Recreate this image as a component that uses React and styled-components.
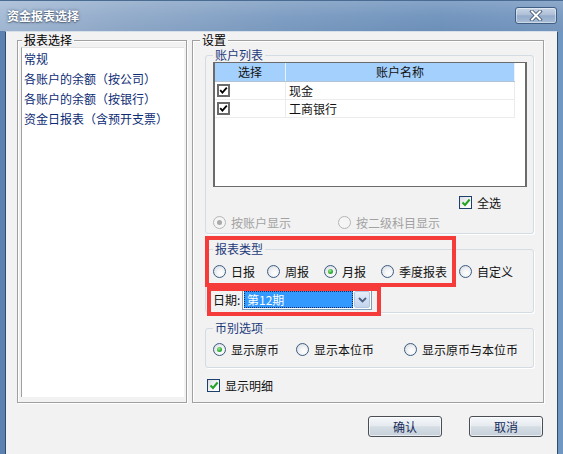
import React from 'react';
import styled, { createGlobalStyle } from 'styled-components';

const GlobalStyle = createGlobalStyle`
  html, body { margin: 0; padding: 0; background: #fff; }
  body {
    font-family: "Noto Sans CJK SC", "Noto Sans", sans-serif;
    font-size: 12px;
  }
  * { box-sizing: border-box; }
`;

const Window = styled.div`
  width: 563px;
  height: 454px;
  display: flex;
  flex-direction: column;
  overflow: hidden;
`;

const TitleBar = styled.div`
  height: 31px;
  flex: none;
  display: flex;
  align-items: center;
  justify-content: space-between;
  padding: 0 6px 1px 7px;
  border-top: 1px solid #4a6b92;
  background:
    linear-gradient(180deg, rgba(255,255,255,0.16) 0%, rgba(255,255,255,0.04) 50%, rgba(0,0,0,0.02) 100%),
    linear-gradient(90deg, #a3b9d4 0%, #8fa9c9 22%, #7b9bc1 50%, #6e92bc 78%, #7798c0 100%);
`;

const Title = styled.div`
  color: #fff;
  font-weight: bold;
  font-size: 12px;
  line-height: 14px;
  text-shadow: 0 0 3px rgba(20, 40, 70, 0.7), 0 1px 1px rgba(0, 0, 0, 0.3);
`;

const CloseButton = styled.div`
  width: 42px;
  height: 17px;
  border: 1px solid #3f5e84;
  border-radius: 3px;
  display: flex;
  align-items: center;
  justify-content: center;
  background: linear-gradient(180deg, #c9d6e6 0%, #aebfd6 45%, #94accb 52%, #a7bcd6 100%);
  box-shadow: inset 0 0 0 1px rgba(255, 255, 255, 0.45);
`;

const Frame = styled.div`
  flex: 1;
  display: flex;
  padding: 0 5px;
  background: linear-gradient(90deg, #5a81b0 0%, #6a8fbb 50%, #7097c2 100%);
`;

const Body = styled.div`
  flex: 1;
  display: flex;
  flex-direction: column;
  background: #f2f2f2;
  border-left: 1px solid #2f4c6e;
  border-right: 1px solid #2f4c6e;
  border-top: 1px solid #d6e0ea;
  padding: 1px 13px 0 11px;
`;

const Main = styled.div`
  display: flex;
  gap: 5px;
  height: 370px;
`;

const Group = styled.fieldset`
  margin: 0;
  min-width: 0;
  width: ${p => p.$w}px;
  border: 1px solid #a0a0a0;
  box-shadow: 1px 1px 0 #fff, inset 1px 1px 0 #fff;
  padding: ${p => p.$pad};
`;

const Legend = styled.legend`
  padding: 0 2px;
  margin-left: ${p => p.$ml || 0}px;
  font-size: 12px;
  line-height: 14px;
  color: ${p => p.$navy ? '#1e3a7b' : '#000'};
  background: #f2f2f2;
`;

const ReportList = styled.div`
  height: 350px;
  background: #fff;
  border-left: 1px solid #a0a0a0;
  border-top: 1px solid #e2e2e2;
  padding: 1px 0 0 2px;
`;

const ReportItem = styled.div`
  height: 20px;
  line-height: 20px;
  color: #0d2c74;
  white-space: nowrap;
`;

const Column = styled.div`
  display: flex;
  flex-direction: column;
  padding-left: 5px;
`;

const SubGroup = styled.fieldset`
  margin: ${p => p.$mt || 0}px 0 0;
  min-width: 0;
  width: 329px;
  border: 1px solid #d3dbe3;
  border-radius: 3px;
  box-shadow: 1px 1px 0 #fff;
  padding: ${p => p.$pt || 0}px 7px ${p => p.$pb || 0}px 7px;
`;

const AccountBox = styled.div`
  width: 314px;
  height: 125px;
  background: #fff;
  border: 1px solid #6b6b6b;
  border-left-width: 2px;
  border-right-width: 2px;
`;

const GridRow = styled.div`
  display: grid;
  grid-template-columns: 71px 229px;
  width: 300px;
  height: ${p => p.$head ? 19 : 18}px;
  background: ${p => p.$head ? '#a4d0fd' : '#fff'};
  border-bottom: 1px solid ${p => p.$head ? '#b4c4d4' : '#ececec'};
`;

const Cell = styled.div`
  display: flex;
  align-items: center;
  justify-content: ${p => p.$center ? 'center' : 'flex-start'};
  padding-left: ${p => p.$center ? 0 : p.$pl || 0}px;
  border-right: 1px solid ${p => p.$head ? '#e6f2ff' : '#ececec'};
  color: #111;
  line-height: 14px;
  white-space: nowrap;
`;

const ClassicBox = styled.span`
  width: 13px;
  height: 13px;
  border: 2px solid #6a6a6a;
  background: #fff;
  display: flex;
  align-items: center;
  justify-content: center;
`;

const VistaBox = styled.span`
  width: 13px;
  height: 13px;
  flex: none;
  border: 1px solid #1d406c;
  background: linear-gradient(135deg, #d9dde2 0%, #f6f7f8 60%, #ffffff 100%);
  display: flex;
  align-items: center;
  justify-content: center;
`;

const Row = styled.div`
  display: flex;
  align-items: center;
  height: 13px;
  margin-top: ${p => p.$mt || 0}px;
  padding-left: ${p => p.$pl || 0}px;
`;

const Option = styled.label`
  display: flex;
  align-items: center;
  gap: 5px;
  width: ${p => (p.$w ? `${p.$w}px` : 'auto')};
  flex: none;
  height: 13px;
  line-height: 13px;
  white-space: nowrap;
  color: ${p => p.$disabled ? '#a2a2a2' : '#111'};
`;

const RadioDot = styled.span`
  width: 13px;
  height: 13px;
  flex: none;
  border-radius: 50%;
  border: 1px solid ${p => p.$disabled ? '#b2b5b8' : '#3b5b80'};
  background: ${p => p.$disabled
    ? '#f5f5f5'
    : 'radial-gradient(circle at 60% 65%, #ffffff 0%, #f2f3f5 40%, #cfd5dc 100%)'};
  display: flex;
  align-items: center;
  justify-content: center;
  &::after {
    content: '';
    display: ${p => p.$checked ? 'block' : 'none'};
    width: 5px;
    height: 5px;
    border-radius: 50%;
    background: ${p => p.$disabled
      ? '#a9a9a9'
      : 'radial-gradient(circle at 40% 35%, #9dee9d 0%, #2fae2f 55%, #16801a 100%)'};
  }
`;

const Annotated = styled.div`
  position: relative;
`;

const RedMark = styled.div`
  position: absolute;
  left: ${p => p.$x}px;
  top: ${p => p.$y}px;
  width: ${p => p.$w}px;
  height: ${p => p.$h}px;
  border: 4px solid #f63b3b;
  pointer-events: none;
`;

const DateRow = styled.div`
  display: flex;
  align-items: center;
  height: 21px;
  margin-top: 11px;
`;

const DateLabel = styled.span`
  width: 29px;
  color: #111;
  line-height: 14px;
`;

const Combo = styled.div`
  width: 130px;
  height: 21px;
  border: 1px solid #7f9db9;
  background: #fff;
  padding: 1px;
  display: flex;
  gap: 1px;
`;

const ComboValue = styled.div`
  flex: 1;
  background: #3399ff;
  color: #fff;
  border: 1px dotted #10285a;
  line-height: 15px;
  padding-left: 2px;
`;

const ComboArrow = styled.div`
  width: 16px;
  border: 1px solid #b4c6df;
  border-radius: 2px;
  background: linear-gradient(180deg, #e6eef9 0%, #d3e0f3 50%, #c2d4ee 100%);
  display: flex;
  align-items: center;
  justify-content: center;
`;

const Buttons = styled.div`
  display: flex;
  justify-content: flex-end;
  gap: 27px;
  margin: 13px 1px 0 0;
`;

const Button = styled.div`
  width: 74px;
  height: 21px;
  border: 1px solid #4b4f55;
  border-radius: 3px;
  background: linear-gradient(180deg, #f6f8fa 0%, #e6ebf0 45%, #d5dde4 52%, #c7d1da 100%);
  box-shadow: inset 0 0 0 1px rgba(255, 255, 255, 0.6);
  display: flex;
  align-items: center;
  justify-content: center;
  color: #152a5c;
  line-height: 14px;
`;

const ClassicCheck = () => (
  <svg width="9" height="9" viewBox="0 0 9 9">
    <path d="M1.2 4.2 L3.4 6.6 L7.8 1.6" fill="none" stroke="#000" strokeWidth="1.8" />
  </svg>
);

const GreenCheck = () => (
  <svg width="10" height="9" viewBox="0 0 10 9">
    <path d="M1.5 4.5 L4 7 L8.6 1.5" fill="none" stroke="#23a323" strokeWidth="2" />
  </svg>
);

const Radio = ({ label, checked, disabled, w }) => (
  <Option $w={w} $disabled={disabled}>
    <RadioDot $checked={checked} $disabled={disabled} />
    {label}
  </Option>
);

const CheckOption = ({ label }) => (
  <Option>
    <VistaBox><GreenCheck /></VistaBox>
    {label}
  </Option>
);

const reports = ['常规', '各账户的余额（按公司）', '各账户的余额（按银行）', '资金日报表（含预开支票）'];
const accounts = ['现金', '工商银行'];

export default function App() {
  return (
    <Window>
      <GlobalStyle />
      <TitleBar>
        <Title>资金报表选择</Title>
        <CloseButton>
          <svg width="14" height="11" viewBox="0 0 14 11">
            <path d="M3 1.5 L11 9.5 M11 1.5 L3 9.5" stroke="#3a4f6c" strokeWidth="3.6" strokeLinecap="square" />
            <path d="M3 1.5 L11 9.5 M11 1.5 L3 9.5" stroke="#fff" strokeWidth="2" strokeLinecap="square" />
          </svg>
        </CloseButton>
      </TitleBar>
      <Frame>
        <Body>
          <Main>
            <Group $w={170} $pad="0 2px 4px 3px">
              <Legend $ml={1}>报表选择</Legend>
              <ReportList>
                {reports.map(r => <ReportItem key={r}>{r}</ReportItem>)}
              </ReportList>
            </Group>
            <Group $w={352} $pad="0 9px 0 7px">
              <Legend>设置</Legend>
              <Column>
                <SubGroup $mt={1} $pb={4}>
                  <Legend $navy>账户列表</Legend>
                  <AccountBox>
                    <GridRow $head>
                      <Cell $head $center>选择</Cell>
                      <Cell $head $center>账户名称</Cell>
                    </GridRow>
                    {accounts.map(a => (
                      <GridRow key={a}>
                        <Cell $pl={2}><ClassicBox><ClassicCheck /></ClassicBox></Cell>
                        <Cell $pl={3}>{a}</Cell>
                      </GridRow>
                    ))}
                  </AccountBox>
                  <Row $mt={9} $pl={246}>
                    <CheckOption label="全选" />
                  </Row>
                  <Row $mt={7}>
                    <Radio w={125} label="按账户显示" checked disabled />
                    <Radio label="按二级科目显示" disabled />
                  </Row>
                </SubGroup>
                <Annotated>
                  <SubGroup $mt={8} $pt={9} $pb={2}>
                    <Legend $navy>报表类型</Legend>
                    <Row>
                      <Radio w={54} label="日报" />
                      <Radio w={57} label="周报" />
                      <Radio w={57} label="月报" checked />
                      <Radio w={78} label="季度报表" />
                      <Radio label="自定义" />
                    </Row>
                    <DateRow>
                      <DateLabel>日期:</DateLabel>
                      <Combo>
                        <ComboValue>第12期</ComboValue>
                        <ComboArrow>
                          <svg width="9" height="6" viewBox="0 0 9 6">
                            <path d="M1 1 L4.5 4.5 L8 1" fill="none" stroke="#4d6185" strokeWidth="1.8" />
                          </svg>
                        </ComboArrow>
                      </Combo>
                    </DateRow>
                  </SubGroup>
                  <RedMark $x={0} $y={2} $w={251} $h={51} />
                  <RedMark $x={2} $y={53} $w={174} $h={29} />
                </Annotated>
                <SubGroup $mt={8} $pt={8} $pb={11}>
                  <Legend $navy>币别选项</Legend>
                  <Row>
                    <Radio w={83} label="显示原币" checked />
                    <Radio w={108} label="显示本位币" />
                    <Radio label="显示原币与本位币" />
                  </Row>
                </SubGroup>
                <Row $mt={11} $pl={2}>
                  <CheckOption label="显示明细" />
                </Row>
              </Column>
            </Group>
          </Main>
          <Buttons>
            <Button>确认</Button>
            <Button>取消</Button>
          </Buttons>
        </Body>
      </Frame>
    </Window>
  );
}
